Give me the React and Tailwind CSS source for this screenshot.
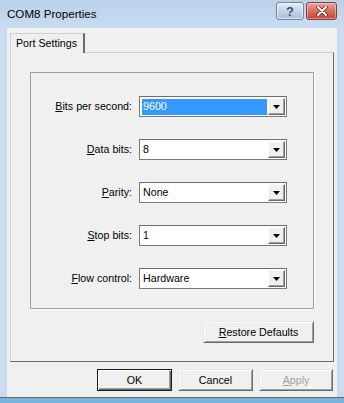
import React from "react";

function U({ children }) {
  return <span className="underline underline-offset-[1px] decoration-[1px]">{children}</span>;
}

function Combo({ value, selected }) {
  return (
    <div className="w-[148px] h-[21px] bg-white border border-[#7a7a7a] border-t-[#6e6e6e] flex items-center pl-[2px] pr-[1px]">
      <div
        className={
          "flex-1 h-[16px] flex items-center pl-[1px] mr-[1px] " +
          (selected ? "bg-[#3399ff] text-white" : "text-black")
        }
      >
        {value}
      </div>
      <div className="w-[17px] h-[17px] bg-[#f0f0f0] border border-t-white border-l-white border-r-[#696969] border-b-[#696969] shadow-[inset_-1px_-1px_0_#a0a0a0] flex items-center justify-center">
        <svg width="7" height="4" viewBox="0 0 7 4">
          <path d="M0 0H7L3.5 4Z" fill="#000" />
        </svg>
      </div>
    </div>
  );
}

function Row({ label, value, selected }) {
  return (
    <div className="flex items-center h-[21px]">
      <div className="w-[102px] text-right pr-[1px] text-black">{label}</div>
      <div className="ml-[6px]">
        <Combo value={value} selected={selected} />
      </div>
    </div>
  );
}

function Btn({ children, w, def, disabled }) {
  return (
    <div
      className={
        "h-[22px] flex items-center justify-center bg-[#f0f0f0] " +
        (def
          ? "border border-[#1a1a1a] shadow-[inset_1px_1px_0_#fff,inset_-1px_-1px_0_#696969,inset_-2px_-2px_0_#a0a0a0] "
          : "border border-t-[#e8e8e8] border-l-[#e8e8e8] border-r-[#696969] border-b-[#696969] shadow-[inset_1px_1px_0_#fff,inset_-1px_-1px_0_#a0a0a0] ") +
        (disabled ? "text-[#a0a0a0]" : "text-black")
      }
      style={{ width: w }}
    >
      {children}
    </div>
  );
}

export default function App() {
  return (
    <div className="w-[344px] h-[403px] flex flex-col bg-[#c9dbee] font-['Liberation_Sans',Arial,sans-serif] text-[10.7px] leading-none overflow-hidden">
      {/* Title bar */}
      <div className="h-[28px] flex items-start bg-gradient-to-b from-[#b9d1ea] to-[#c9dcf0]">
        <div className="pl-[7px] pt-[8px] text-[11.6px] text-black">COM8 Properties</div>
        <div className="ml-auto flex gap-[2px] pt-[2px] pr-[7px]">
          <div className="w-[28px] h-[18px] rounded-[3px] border border-[#6d85a3] bg-gradient-to-b from-[#e4edf7] via-[#c3d5e9] to-[#a9c0db] flex items-center justify-center shadow-[inset_0_0_0_1px_rgba(255,255,255,0.6)]">
            <span className="text-[13px] font-bold text-[#3b5070] leading-none">?</span>
          </div>
          <div className="w-[31px] h-[18px] rounded-[3px] border border-[#8a3a32] bg-gradient-to-b from-[#e8a89c] via-[#d46e5e] to-[#c0443a] flex items-center justify-center shadow-[inset_0_0_0_1px_rgba(255,255,255,0.4)]">
            <svg width="12" height="10" viewBox="0 0 12 10">
              <path d="M2 1L10 9M10 1L2 9" stroke="#5a1a14" strokeWidth="3.4" strokeLinecap="round" />
              <path d="M2 1L10 9M10 1L2 9" stroke="#fff" strokeWidth="2" strokeLinecap="round" />
            </svg>
          </div>
        </div>
      </div>

      {/* Client */}
      <div className="mx-[7px] h-[369px] bg-[#f0f0f0] flex flex-col pl-[3px] pr-[3px]">
        {/* Tab strip */}
        <div className="pt-[5px] flex">
          <div className="relative z-10 -mb-px w-[75px] h-[20px] bg-[#f0f0f0] border-t border-l border-t-[#d0d0d0] border-l-[#d0d0d0] border-r-2 border-r-[#696969] flex items-center justify-center text-black pr-[1px]">
            Port Settings
          </div>
        </div>
        {/* Tab panel */}
        <div className="h-[310px] border border-t-[#d0d0d0] border-l-[#d0d0d0] border-r-[#696969] border-b-[#696969] flex flex-col px-[19px] pt-[19px]">
          <div className="h-[237px] border border-[#a0a0a0] shadow-[1px_1px_0_#fff] flex flex-col pt-[23px] gap-[22px]">
            <Row label={<><U>B</U>its per second:</>} value="9600" selected />
            <Row label={<><U>D</U>ata bits:</>} value="8" />
            <Row label={<><U>P</U>arity:</>} value="None" />
            <Row label={<><U>S</U>top bits:</>} value="1" />
            <Row label={<><U>F</U>low control:</>} value="Hardware" />
          </div>
          <div className="flex justify-end mt-[12px]">
            <Btn w="111px"><span><U>R</U>estore Defaults</span></Btn>
          </div>
        </div>
        {/* Bottom buttons */}
        <div className="flex justify-end gap-[6px] mt-[7px] pr-px">
          <Btn w="75px" def>OK</Btn>
          <Btn w="75px">Cancel</Btn>
          <Btn w="74px" disabled><span><U>A</U>pply</span></Btn>
        </div>
      </div>
      <div className="h-px bg-[#6a6a6a]" />
      <div className="flex-1 bg-[#78b4dc]" />
    </div>
  );
}
